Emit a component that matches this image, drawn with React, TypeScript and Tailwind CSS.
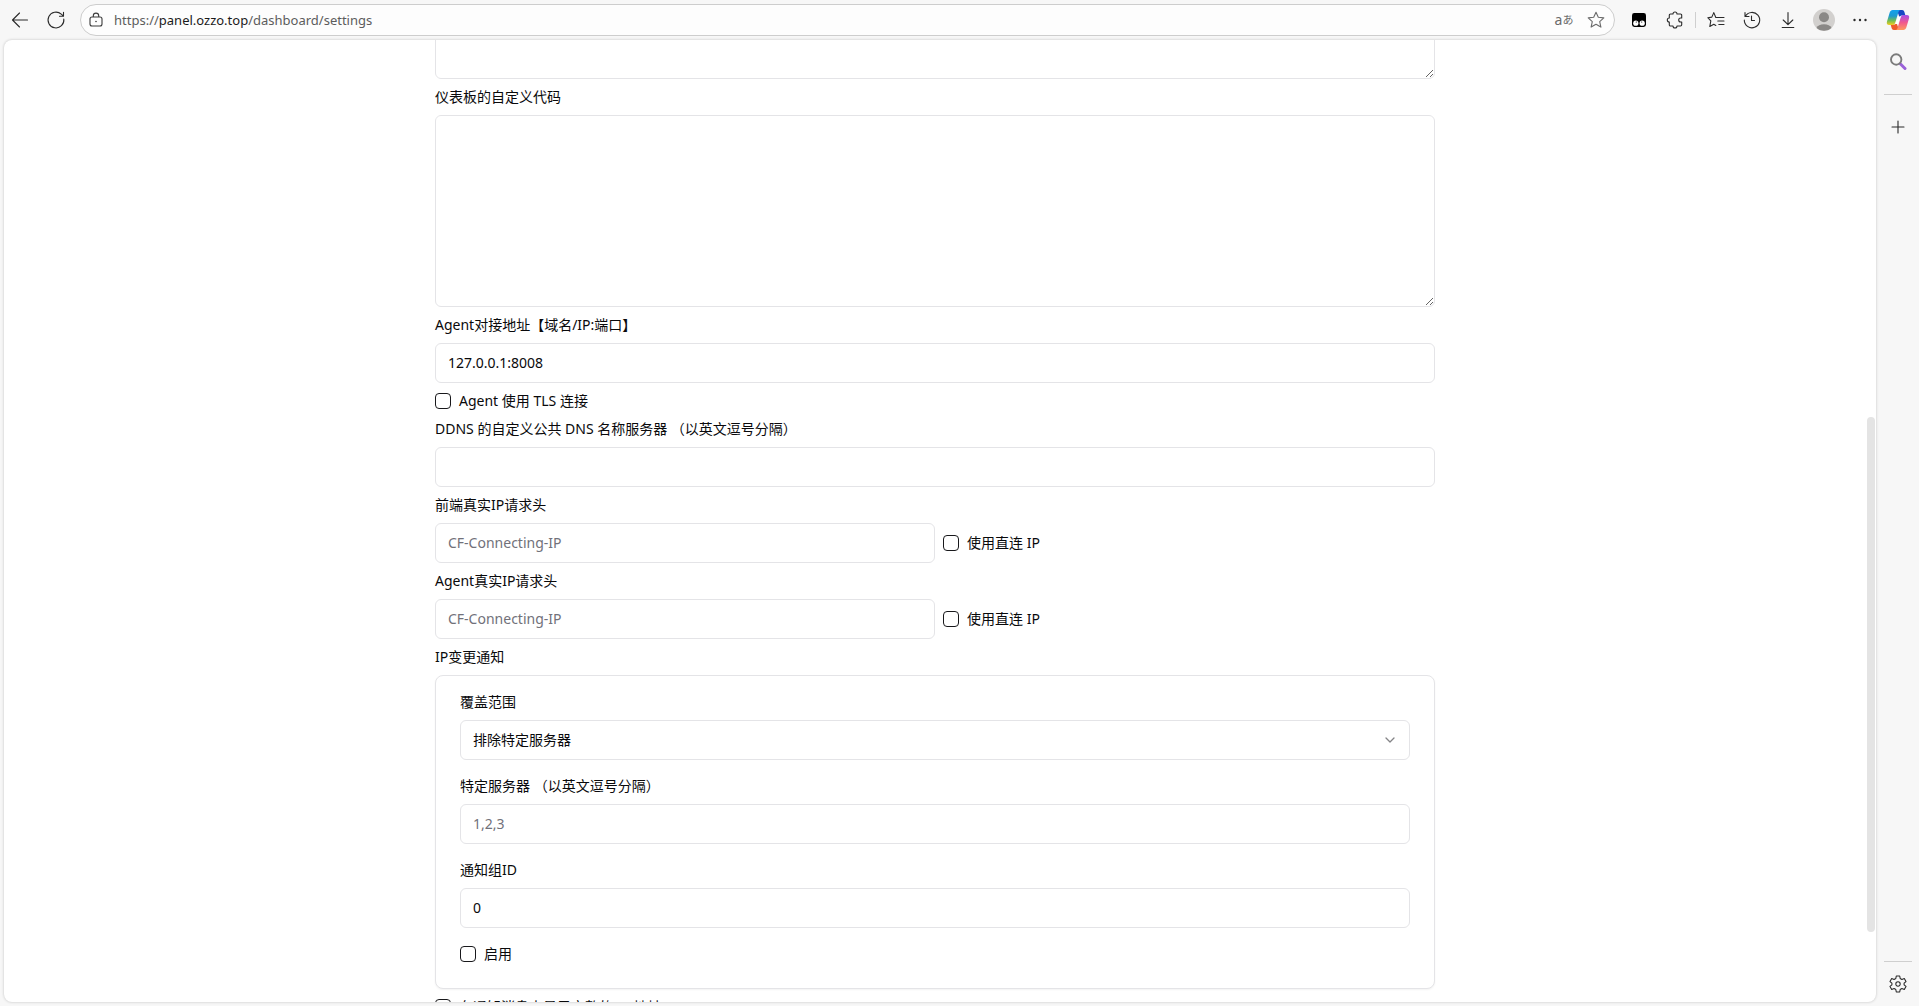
import { useState } from "react";
import type { ReactNode } from "react";

type FieldProps = {
  id: string;
  label: string;
  children: ReactNode;
};

type CheckFieldProps = {
  id: string;
  label: string;
};

const inputClass =
  "block h-10 w-full rounded-md border border-[#e4e4e7] bg-white px-3 pb-0.5 text-sm text-[#09090b] outline-none placeholder:text-[#71717a]";

const textareaClass =
  "block h-48 w-full resize-y rounded-md border border-[#e4e4e7] bg-white px-3 py-2 text-sm outline-none";

function Field({ id, label, children }: FieldProps) {
  return (
    <div className="flex flex-col gap-2">
      <label htmlFor={id} className="text-sm leading-5">
        {label}
      </label>
      {children}
    </div>
  );
}

function CheckField({ id, label }: CheckFieldProps) {
  return (
    <div className="flex h-5 items-center gap-2">
      <input
        id={id}
        type="checkbox"
        className="size-4 shrink-0 appearance-none rounded border border-[#18181b] bg-white checked:bg-[#18181b]"
      />
      <label htmlFor={id} className="text-sm leading-5 whitespace-nowrap">
        {label}
      </label>
    </div>
  );
}

function IconButton({ label, children }: { label: string; children: ReactNode }) {
  return (
    <button
      type="button"
      aria-label={label}
      className="flex size-6 shrink-0 items-center justify-center text-[#2b2b2b]"
    >
      {children}
    </button>
  );
}

function Line({ d, className = "size-5" }: { d: string; className?: string }) {
  return (
    <svg
      viewBox="0 0 20 20"
      className={className}
      fill="none"
      stroke="currentColor"
      strokeWidth="1.1"
      strokeLinecap="round"
      strokeLinejoin="round"
    >
      <path d={d} />
    </svg>
  );
}

function Toolbar() {
  return (
    <header className="flex h-10 shrink-0 items-center pl-2 pr-[9px]">
      <IconButton label="返回">
        <Line d="M17.5 10H2.5M9.5 3L2.5 10L9.5 17" />
      </IconButton>
      <div className="ml-3 mr-3 flex">
        <IconButton label="刷新">
          <Line d="M17.8 9A7.9 7.9 0 1 1 15.3 4.2L17.5 6.2M17.5 2.2V6.2H13.5" />
        </IconButton>
      </div>

      {/* Address bar */}
      <div className="flex h-8 flex-1 items-center rounded-full border border-[#cdcdcd] bg-[#fdfdfd] pl-[3px] pr-1.5">
        <IconButton label="站点信息">
          <svg viewBox="0 0 16 16" className="size-4" fill="none" stroke="#3b3b3b" strokeWidth="1.1">
            <rect x="2" y="5" width="12" height="9" rx="2" />
            <path d="M5.300 5V3.800a2.700 2.700 0 0 1 5.400 0V5" />
            <circle cx="8" cy="9.500" r=".8" fill="#3b3b3b" stroke="none" />
          </svg>
        </IconButton>
        <div className="ml-1.5 flex-1 pt-px text-[13px] text-[#5c5c5c]">
          https://<span className="text-[#1b1b1b]">panel.ozzo.top</span>/dashboard/settings
        </div>
        <button
          type="button"
          aria-label="翻译此页"
          className="mr-2 flex size-6 items-center justify-center text-[#6b6b6b]"
        >
          <span className="text-sm leading-4">a</span>
          <span className="text-[11px] leading-4">あ</span>
        </button>
        <button
          type="button"
          aria-label="收藏"
          className="flex size-6 items-center justify-center text-[#6b6b6b]"
        >
          <Line d="M10 2.2l2.3 5.1 5.5.6-4.1 3.7 1.2 5.5L10 14.3l-4.9 2.8 1.2-5.5L2.2 7.9l5.500-.6z" />
        </button>
      </div>

      {/* Extensions and browser actions */}
      <div className="flex items-center gap-3 pl-3">
        <IconButton label="扩展">
          <svg viewBox="0 0 14 14" className="size-3.5">
            <rect width="14" height="14" rx="2.4" fill="#000" />
            <circle cx="3.800" cy="10.200" r="2.600" fill="#fff" />
            <circle cx="10.200" cy="10.200" r="2.600" fill="#fff" />
            <circle cx="4.300" cy="9" r=".6" />
            <circle cx="9.700" cy="9" r=".6" />
          </svg>
        </IconButton>
        <IconButton label="管理扩展">
          <Line d="M5.500 4H8a2 2 0 0 1 4 0h3.500a1.200 1.200 0 0 1 1.200 1.200V8h-1a2 2 0 0 0 0 4h1v2.800a1.200 1.200 0 0 1-1.200 1.200H12a2 2 0 0 1-4 0H5.500a1.200 1.200 0 0 1-1.200-1.200V12a2 2 0 0 1 0-4V5.200A1.200 1.200 0 0 1 5.500 4z" />
        </IconButton>
        <div className="-mx-1 h-4 w-px bg-[#cfcfcf]" />
        <IconButton label="收藏夹">
          <Line d="M11.500 7.500H9.800L7.800 2.600 5.800 7.100 1.800 7.700l3 3.100-1 5.700 4-2.200 2 1.100M11.800 7.500H18M11.800 11H18M12.800 14.500H18" />
        </IconButton>
        <IconButton label="历史记录">
          <Line d="M3 2.500V6.500H7M3.300 6.300A7.700 7.700 0 1 1 2.300 10M9.500 6V10.500H12.500" />
        </IconButton>
        <IconButton label="下载">
          <Line d="M10 2.500V14.500M5.200 10L10 14.700 14.800 10M4.200 17.500H15.800" />
        </IconButton>
        <IconButton label="个人资料">
          <svg viewBox="0 0 22 22" className="size-[22px]">
            <circle cx="11" cy="11" r="11" fill="#d2d0ce" />
            <circle cx="11" cy="8.300" r="5" fill="#8a8886" />
            <path d="M3.500 18.900a7.900 5.500 0 0 1 15 0A11 11 0 0 1 3.500 18.900z" fill="#8a8886" />
          </svg>
        </IconButton>
        <IconButton label="设置及其他">
          <svg viewBox="0 0 20 20" className="size-5" fill="#2b2b2b">
            <circle cx="4.500" cy="10" r="1.200" />
            <circle cx="10" cy="10" r="1.200" />
            <circle cx="15.500" cy="10" r="1.200" />
          </svg>
        </IconButton>
        <div className="ml-0.5 flex">
          <IconButton label="Copilot">
            <CopilotLogo />
          </IconButton>
        </div>
      </div>
    </header>
  );
}

function CopilotLogo() {
  return (
    <svg viewBox="0 0 24 24" className="size-6">
      <defs>
        <linearGradient id="cpLeft" x1="0" y1="0" x2="0" y2="1">
          <stop offset="0" stopColor="#12a0ee" />
          <stop offset=".4" stopColor="#1d9ad0" />
          <stop offset=".7" stopColor="#6fbb58" />
          <stop offset="1" stopColor="#f3cf1d" />
        </linearGradient>
        <linearGradient id="cpRight" x1="0" y1="0" x2="0" y2="1">
          <stop offset="0" stopColor="#a44fea" />
          <stop offset=".5" stopColor="#f0588f" />
          <stop offset="1" stopColor="#ff9a5c" />
        </linearGradient>
      </defs>
      <path d="M11 2h5.200c1.200 0 1.800.7 2.200 2l1 3.500h-3.200c-1.400 0-2.200.6-2.700 2z" fill="#1747c4" />
      <path d="M13 22H7.800c-1.200 0-1.800-.7-2.200-2l-1-3.500h3.200c1.400 0 2.200-.6 2.700-2z" fill="#ee5a2c" />
      <path d="M6.700 2H14.500c-1.200 0-1.700 1-2.100 2.300L9.300 14.500c-.5 1.600-1.300 2.500-2.800 2.500H3.200C1 17 .4 15.500 1 13.500L3.700 4.500C4.200 2.900 5.200 2 6.700 2z" fill="url(#cpLeft)" />
      <path d="M17.300 22H9.500c1.200 0 1.700-1 2.100-2.300L14.700 9.500c.5-1.600 1.300-2.500 2.800-2.500h3.300c2.200 0 2.800 1.500 2.200 3.500l-2.700 9c-.5 1.600-1.500 2.500-3 2.500z" fill="url(#cpRight)" />
      <path d="M12.300 8.500h2.400L11.900 16H9.300z" fill="#fff" />
    </svg>
  );
}

function Sidebar() {
  return (
    <aside className="flex w-[43px] shrink-0 flex-col items-center pb-2.5 pt-2.5">
      <IconButton label="搜索">
        <svg viewBox="0 0 18 18" className="size-[18px]" fill="none">
          <path d="M11.500 11L16 15.500" stroke="#9a62d8" strokeWidth="3" strokeLinecap="round" />
          <circle cx="7.200" cy="6.500" r="5.200" stroke="#7b7b7b" strokeWidth="1.900" />
        </svg>
      </IconButton>
      <div className="mt-5 h-px w-7 bg-[#cfcfcf]" />
      <div className="mt-5 flex">
        <IconButton label="添加">
          <Line d="M10 4V16M4 10H16" />
        </IconButton>
      </div>
      <div className="mt-auto mb-2.5 h-px w-7 bg-[#cfcfcf]" />
      <IconButton label="侧栏设置">
        <Line d="M8.300 2h3.400l.5 2.500 1.700 1 2.400-.9 1.700 3-1.900 1.600v1.600l1.900 1.600-1.700 3-2.400-.9-1.700 1-.5 2.500H8.300l-.5-2.500-1.700-1-2.400.9-1.700-3 1.900-1.600V9.200L2 7.600l1.700-3 2.400.9 1.700-1zM12.200 10a2.200 2.200 0 1 1-4.400 0a2.200 2.200 0 0 1 4.400 0" />
      </IconButton>
    </aside>
  );
}

function NotificationCard() {
  return (
    <div className="flex flex-col gap-4 rounded-lg border border-[#e4e4e7] bg-white px-6 pt-4 pb-6 shadow-xs">
      <Field id="cover" label="覆盖范围">
        <div className="grid items-center">
          <select
            id="cover"
            defaultValue="exclude"
            className="col-start-1 row-start-1 h-10 w-full appearance-none rounded-md border border-[#e4e4e7] bg-white px-3 text-sm outline-none"
          >
            <option value="exclude">排除特定服务器</option>
            <option value="include">仅特定服务器</option>
          </select>
          <svg
            viewBox="0 0 16 16"
            className="pointer-events-none col-start-1 row-start-1 mr-3 size-4 justify-self-end"
            fill="none"
            stroke="#848487"
            strokeWidth="1.300"
            strokeLinecap="round"
            strokeLinejoin="round"
          >
            <path d="M4 6l4 4 4-4" />
          </svg>
        </div>
      </Field>
      <Field id="servers" label="特定服务器 （以英文逗号分隔）">
        <input id="servers" type="text" placeholder="1,2,3" className={inputClass} />
      </Field>
      <Field id="group" label="通知组ID">
        <input id="group" type="text" defaultValue="0" className={inputClass} />
      </Field>
      <CheckField id="enable" label="启用" />
    </div>
  );
}

function SettingsForm() {
  const [address, setAddress] = useState("127.0.0.1:8008");

  return (
    <form className="mx-auto -mt-[153px] flex max-w-[1000px] flex-col gap-2">
      <textarea aria-label="自定义代码" className={textareaClass} />
      <Field id="dashboard-code" label="仪表板的自定义代码">
        <textarea id="dashboard-code" className={textareaClass} />
      </Field>
      <Field id="address" label="Agent对接地址【域名/IP:端口】">
        <input
          id="address"
          type="text"
          value={address}
          onChange={(e) => setAddress(e.target.value)}
          className={inputClass}
        />
      </Field>
      <CheckField id="tls" label="Agent 使用 TLS 连接" />
      <Field id="dns" label="DDNS 的自定义公共 DNS 名称服务器 （以英文逗号分隔）">
        <input id="dns" type="text" className={inputClass} />
      </Field>
      <Field id="web-header" label="前端真实IP请求头">
        <div className="flex items-center gap-2">
          <div className="w-1/2">
            <input id="web-header" type="text" placeholder="CF-Connecting-IP" className={inputClass} />
          </div>
          <CheckField id="web-direct" label="使用直连 IP" />
        </div>
      </Field>
      <Field id="agent-header" label="Agent真实IP请求头">
        <div className="flex items-center gap-2">
          <div className="w-1/2">
            <input id="agent-header" type="text" placeholder="CF-Connecting-IP" className={inputClass} />
          </div>
          <CheckField id="agent-direct" label="使用直连 IP" />
        </div>
      </Field>
      <h2 className="text-sm leading-5">IP变更通知</h2>
      <NotificationCard />
      <CheckField id="plain-ip" label="在通知消息中显示完整的 IP 地址" />
    </form>
  );
}

function App() {
  return (
    <div className="flex h-screen flex-col overflow-hidden bg-[#f7f7f7] font-['Noto_Sans','Noto_Sans_CJK_SC',sans-serif] text-[#09090b]">
      <Toolbar />
      <div className="flex min-h-0 flex-1 pl-1">
        <main className="relative mb-1 min-w-0 flex-1 overflow-hidden rounded-lg bg-white pr-2.5 shadow-[0_0_3px_rgba(0,0,0,0.22)]">
          <SettingsForm />
          {/* Scroll thumb */}
          <div className="absolute right-px top-[39.2%] h-[53.5%] w-2 rounded-full bg-[#e4e4e4]" />
        </main>
        <Sidebar />
      </div>
    </div>
  );
}

export default App;
